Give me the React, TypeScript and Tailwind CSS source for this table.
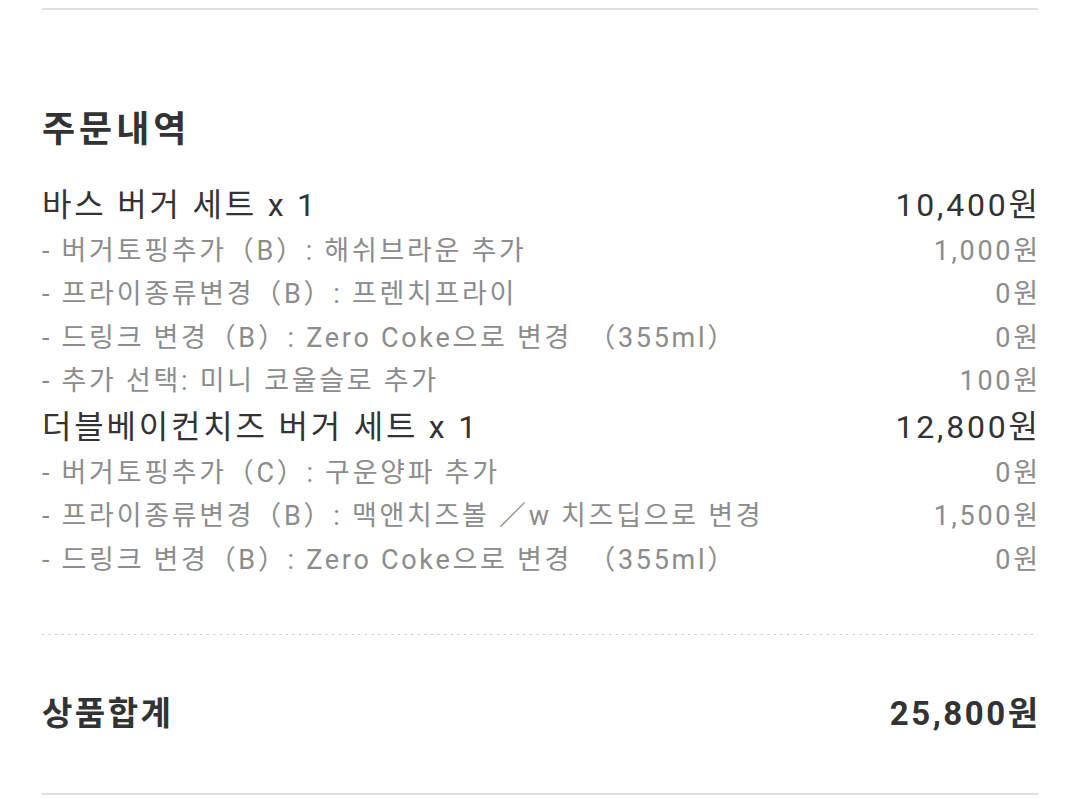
import React from "react"

type Line = { label: string; price: string }
type Item = { title: string; price: string; options: Line[] }

const items: Item[] = [
  {
    title: "바스 버거 세트 x 1",
    price: "10,400원",
    options: [
      { label: "- 버거토핑추가（B）: 해쉬브라운 추가", price: "1,000원" },
      { label: "- 프라이종류변경（B）: 프렌치프라이", price: "0원" },
      { label: "- 드링크 변경（B）: Zero Coke으로 변경　（355ml）", price: "0원" },
      { label: "- 추가 선택: 미니 코울슬로 추가", price: "100원" },
    ],
  },
  {
    title: "더블베이컨치즈 버거 세트 x 1",
    price: "12,800원",
    options: [
      { label: "- 버거토핑추가（C）: 구운양파 추가", price: "0원" },
      { label: "- 프라이종류변경（B）: 맥앤치즈볼 ／w 치즈딥으로 변경", price: "1,500원" },
      { label: "- 드링크 변경（B）: Zero Coke으로 변경　（355ml）", price: "0원" },
    ],
  },
]

export default function App() {
  return (
    <div className="min-h-[799px] bg-white font-['Roboto','Noto_Sans_CJK_KR',sans-serif] pt-2">
      <div className="mx-[42px] border-t-2 border-[#e0e0e0]" />

      <div className="mx-[42px]">
        {/* 주문내역 */}
        <h2 className="mt-[96px] h-[48px] flex items-center text-[36px] font-bold text-[#333] tracking-[4px]">
          주문내역
        </h2>

        <div className="mt-[27px]">
          {items.map((item, i) => (
            <div key={i}>
              <div className="h-[48px] flex items-center justify-between text-[32px] text-[#333] tracking-[2.8px]">
                <span>{item.title}</span>
                <span className="-mr-[2.8px]">{item.price}</span>
              </div>
              {item.options.map((o, j) => (
                <div
                  key={j}
                  className="h-[43.5px] flex items-center justify-between text-[27px] text-[#8c8c8c] tracking-[2.7px]"
                >
                  <span className="whitespace-pre">{o.label}</span>
                  <span className="-mr-[2.7px]">{o.price}</span>
                </div>
              ))}
            </div>
          ))}
        </div>

        {/* dotted divider */}
        <div className="mt-[52px] h-px bg-[linear-gradient(to_right,#c4c4c4_2px,transparent_2px)] bg-[length:6.6px_1px]" />

        {/* 상품합계 */}
        <div className="h-[158px] flex items-center justify-between text-[33px] font-bold text-[#333] tracking-[2.5px]">
          <span>상품합계</span>
          <span className="-mr-[2.5px]">25,800원</span>
        </div>
        <div className="border-t-2 border-[#e0e0e0]" />
      </div>
    </div>
  )
}
